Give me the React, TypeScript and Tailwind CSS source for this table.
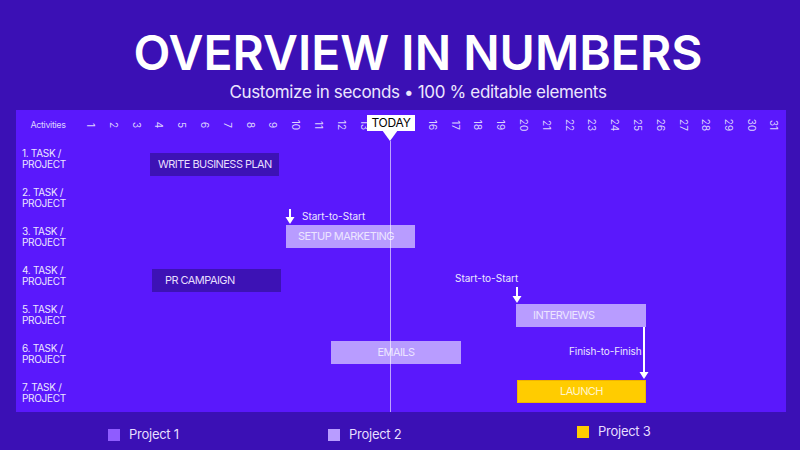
import React from "react";

const days = Array.from({ length: 31 }, (_, i) => i + 1);

type Bar = { text: string; cls: string };
const rows: { n: number; bar?: Bar }[] = [
  { n: 1, bar: { text: "WRITE BUSINESS PLAN", cls: "ml-[70px] mt-[13px] w-[129px] bg-[#3d12b5] text-[#e6defd] pl-[8px]" } },
  { n: 2 },
  { n: 3, bar: { text: "SETUP MARKETING", cls: "ml-[206px] mt-[7px] w-[129px] bg-[#b89cff] text-[#ece5ff] pl-[12px]" } },
  { n: 4, bar: { text: "PR CAMPAIGN", cls: "ml-[72px] mt-[12px] w-[129px] bg-[#3d12b5] text-[#e6defd] pl-[13px]" } },
  { n: 5, bar: { text: "INTERVIEWS", cls: "ml-[436px] mt-[8px] w-[130px] bg-[#b89cff] text-[#ece5ff] pl-[17px]" } },
  { n: 6, bar: { text: "EMAILS", cls: "ml-[251px] mt-[6px] w-[130px] bg-[#b89cff] text-[#ece5ff] justify-center" } },
  { n: 7, bar: { text: "LAUNCH", cls: "ml-[437px] mt-[6px] w-[129px] bg-[#ffcc00] text-[#fff4cc] justify-center border border-[#f0b400]" } },
];

function DownArrow({ h }: { h: number }) {
  return (
    <svg width="10" height={h} viewBox={`0 0 10 ${h}`}>
      <line x1="5" y1="0" x2="5" y2={h - 4} stroke="white" strokeWidth="2" />
      <polygon points={`0.5,${h - 7} 9.5,${h - 7} 5,${h}`} fill="white" />
    </svg>
  );
}

export default function App() {
  return (
    <div
      className="w-[800px] h-[450px] bg-[#3b10b5] flex flex-col overflow-hidden"
      style={{ fontFamily: "Inter, 'Noto Sans', sans-serif" }}
    >
      <div className="pl-[36px] pt-[29px] flex flex-col items-center text-white">
        <div className="h-[48px] text-[48px] leading-none font-semibold tracking-normal">OVERVIEW IN NUMBERS</div>
        <div className="mt-[6px] h-[18px] text-[17px] leading-[18px] text-[#ece6ff] tracking-[-0.02em]">
          Customize in seconds • 100 % editable elements
        </div>
      </div>

      <div className="relative ml-[16px] mt-[8.5px] w-[770px] h-[302px] bg-[#5a18fc]">
        <div className="grid grid-cols-[64px_repeat(31,1fr)] h-[30px] items-center">
          <div className="text-center text-[9px] text-[#ddd3ff] tracking-[-0.04em]">Activities</div>
          {days.map((d) => (
            <div key={d} className="flex justify-center">
              <span className="rotate-90 text-[10px] leading-none text-[#ddd3ff] inline-block">{d}</span>
            </div>
          ))}
        </div>

        {rows.map((r) => (
          <div key={r.n} className="flex h-[39px]">
            <div className="w-[64px] shrink-0 pl-[6px] flex flex-col justify-center text-[10px] leading-[11.5px] tracking-[-0.03em] text-[#ece6ff]">
              <span>{r.n}. TASK /</span>
              <span>PROJECT</span>
            </div>
            <div className="flex-1 flex items-start">
              {r.bar && (
                <div className={`h-[23px] flex items-center text-[11px] tracking-[-0.05em] shrink-0 ${r.bar.cls}`}>
                  {r.bar.text}
                </div>
              )}
            </div>
          </div>
        ))}

        {/* Today marker */}
        <div className="absolute left-[374px] top-[31px] bottom-0 w-px bg-white/60 z-10" />
        <div className="absolute left-[351px] top-[5px] w-[48px] h-[16px] bg-white text-black text-[12px] flex items-center justify-center z-20 tracking-[-0.02em]">
          TODAY
        </div>
        <div className="absolute left-[366px] top-[20px] w-0 h-0 border-x-[8px] border-x-transparent border-t-[11px] border-t-white z-20" />

        {/* dependency 1 */}
        <div className="absolute left-[269px] top-[99px] z-20">
          <DownArrow h={15} />
        </div>
        <div className="absolute left-[286px] top-[99px] text-[10px] leading-[14px] text-[#ece6ff]">Start-to-Start</div>

        {/* dependency 2 */}
        <div className="absolute left-[439px] top-[161px] text-[10px] leading-[14px] text-[#ece6ff]">Start-to-Start</div>
        <div className="absolute left-[496px] top-[177px] z-20">
          <DownArrow h={16} />
        </div>

        {/* dependency 3 */}
        <div className="absolute left-[553px] top-[234px] text-[10px] leading-[14px] tracking-[-0.01em] text-[#ece6ff]">Finish-to-Finish</div>
        <div className="absolute left-[623px] top-[217px] z-20">
          <DownArrow h={52} />
        </div>
      </div>

      <div className="flex items-center mt-[11px] h-[24px] text-[13px] tracking-[-0.02em] text-[#e6deff]">
        <div className="ml-[108px] w-[220px] flex items-center gap-[9px]">
          <div className="w-[12px] h-[12px] bg-[#8f5cff]" />
          <span>Project 1</span>
        </div>
        <div className="w-[249px] flex items-center gap-[9px]">
          <div className="w-[12px] h-[12px] bg-[#b89cff]" />
          <span>Project 2</span>
        </div>
        <div className="flex items-center gap-[9px] -mt-[6px]">
          <div className="w-[12px] h-[12px] bg-[#ffcc00]" />
          <span>Project 3</span>
        </div>
      </div>
    </div>
  );
}
